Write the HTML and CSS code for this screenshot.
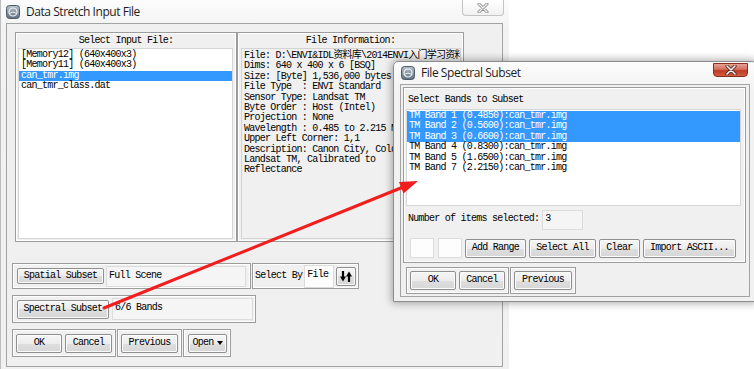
FILE: index.html
```html
<!DOCTYPE html>
<html lang="en">

<head>
    <meta charset="UTF-8">
    <title>Data Stretch Input File</title>
    <link rel="stylesheet" href="styles.css">
</head>

<body>
    <div class="desktop">

        <!-- main window (inactive) -->
        <div class="window main-win">
            <div class="titlebar">
                <svg class="app-icon" width="14" height="14" viewBox="0 0 14 14">
                    <defs>
                        <linearGradient id="ig1" x1="0" y1="0" x2="0" y2="1">
                            <stop offset="0" stop-color="#b9c3cc" />
                            <stop offset="1" stop-color="#5d6d7c" />
                        </linearGradient>
                    </defs>
                    <rect x="0.5" y="0.5" width="13" height="13" rx="3" fill="url(#ig1)" stroke="#4d5a66" />
                    <circle cx="7" cy="7" r="4" fill="none" stroke="#eef2f5" stroke-width="1.2" />
                    <path d="M3.6 8.4 Q7 5.6 10.4 8.4" fill="none" stroke="#eef2f5" stroke-width="1" />
                </svg>
                <span class="title">Data Stretch Input File</span>
                <div class="close-btn idle">
                    <svg width="12" height="10" viewBox="0 0 12 10">
                        <path d="M2 1 L10 9 M10 1 L2 9" stroke="#8c8c8c" stroke-width="3" stroke-linecap="round" />
                        <path d="M2 1 L10 9 M10 1 L2 9" stroke="#f4f4f4" stroke-width="1.3" stroke-linecap="round" />
                    </svg>
                </div>
            </div>

            <div class="client main-client">
                <div class="top-row">
                    <div class="group files">
                        <div class="group-title">Select Input File:</div>
                        <ul class="listbox">
                            <li>[Memory12] (640x400x3)</li>
                            <li>[Memory11] (640x400x3)</li>
                            <li class="sel">can_tmr.img</li>
                            <li>can_tmr_class.dat</li>
                        </ul>
                    </div>
                    <div class="group info">
                        <div class="group-title">File Information:</div>
                        <div class="info-text">File: D:\ENVI&amp;IDL资料库\2014ENVI入门学习资料
Dims: 640 x 400 x 6 [BSQ]
Size: [Byte] 1,536,000 bytes.
File Type  : ENVI Standard
Sensor Type: Landsat TM
Byte Order : Host (Intel)
Projection : None
Wavelength : 0.485 to 2.215 Micrometers
Upper Left Corner: 1,1
Description: Canon City, Colorado
Landsat TM, Calibrated to
Reflectance</div>
                    </div>
                </div>

                <div class="row row-spatial">
                    <div class="group spatial">
                        <button class="btn spatial-btn">Spatial Subset</button>
                        <div class="field spatial-field">Full Scene</div>
                    </div>
                    <div class="group selectby">
                        <span class="label">Select By</span>
                        <div class="field white by-field">File</div>
                        <button class="btn sort-btn">
                            <svg width="12" height="11" viewBox="0 0 12 11">
                                <path d="M3 0 V6" stroke="#000" stroke-width="2.2" />
                                <path d="M0 5.5 H6 L3 10.5 Z" fill="#000" />
                                <path d="M9 11 V5" stroke="#000" stroke-width="2.2" />
                                <path d="M6 5.5 H12 L9 0.5 Z" fill="#000" />
                            </svg>
                        </button>
                    </div>
                </div>

                <div class="row row-spectral">
                    <div class="group spectral">
                        <button class="btn spectral-btn">Spectral Subset</button>
                        <div class="field spectral-field">6/6 Bands</div>
                    </div>
                </div>

                <div class="row row-actions">
                    <div class="group ok-group">
                        <button class="btn ok-btn">OK</button>
                        <button class="btn cancel-btn">Cancel</button>
                    </div>
                    <div class="group prev-group">
                        <button class="btn prev-btn">Previous</button>
                    </div>
                    <div class="group open-group">
                        <button class="btn open-btn">Open<span class="caret"></span></button>
                    </div>
                </div>
            </div>
        </div>

        <!-- spectral subset dialog (active) -->
        <div class="window dlg">
            <div class="titlebar">
                <svg class="app-icon" width="14" height="14" viewBox="0 0 14 14">
                    <defs>
                        <linearGradient id="ig2" x1="0" y1="0" x2="0" y2="1">
                            <stop offset="0" stop-color="#b9c3cc" />
                            <stop offset="1" stop-color="#5d6d7c" />
                        </linearGradient>
                    </defs>
                    <rect x="0.5" y="0.5" width="13" height="13" rx="3" fill="url(#ig2)" stroke="#4d5a66" />
                    <circle cx="7" cy="7" r="4" fill="none" stroke="#eef2f5" stroke-width="1.2" />
                    <path d="M3.6 8.4 Q7 5.6 10.4 8.4" fill="none" stroke="#eef2f5" stroke-width="1" />
                </svg>
                <span class="title">File Spectral Subset</span>
                <div class="close-btn active">
                    <svg width="12" height="10" viewBox="0 0 12 10">
                        <path d="M2 1 L10 9 M10 1 L2 9" stroke="#5a2a24" stroke-width="3.2" stroke-linecap="round" />
                        <path d="M2 1 L10 9 M10 1 L2 9" stroke="#ffffff" stroke-width="1.5" stroke-linecap="round" />
                    </svg>
                </div>
            </div>

            <div class="client dlg-client">
                <div class="group bands">
                    <div class="bands-title">Select Bands to Subset</div>
                    <ul class="listbox band-list">
                        <li class="sel">TM Band 1 (0.4850):can_tmr.img</li>
                        <li class="sel">TM Band 2 (0.5600):can_tmr.img</li>
                        <li class="sel">TM Band 3 (0.6600):can_tmr.img</li>
                        <li>TM Band 4 (0.8300):can_tmr.img</li>
                        <li>TM Band 5 (1.6500):can_tmr.img</li>
                        <li>TM Band 7 (2.2150):can_tmr.img</li>
                    </ul>
                    <div class="count-row">
                        <span class="label">Number of items selected:</span>
                        <div class="field count-field">3</div>
                    </div>
                    <div class="range-row">
                        <div class="field white range-field"></div>
                        <div class="field white range-field"></div>
                        <button class="btn add-btn">Add Range</button>
                        <button class="btn all-btn">Select All</button>
                        <button class="btn clear-btn">Clear</button>
                        <button class="btn import-btn">Import ASCII...</button>
                    </div>
                </div>

                <div class="row dlg-actions">
                    <div class="group dlg-ok-group">
                        <button class="btn ok-btn">OK</button>
                        <button class="btn cancel-btn">Cancel</button>
                    </div>
                    <div class="group dlg-prev-group">
                        <button class="btn prev-btn">Previous</button>
                    </div>
                </div>
            </div>
        </div>

        <!-- red annotation arrow -->
        <svg class="annotation" width="754" height="369" viewBox="0 0 754 369">
            <line x1="104" y1="308" x2="402" y2="187.5" stroke="#f21d1d" stroke-width="3" stroke-linecap="round" />
            <polygon points="418,181 403.5,193.5 399,182" fill="#f21d1d" />
        </svg>
    </div>
</body>

</html>
```

FILE: styles.css
```css
* {
    box-sizing: border-box;
}

html,
body {
    margin: 0;
    padding: 0;
    background: #ffffff;
    overflow: hidden;
}

.desktop {
    position: relative;
    width: 754px;
    height: 369px;
    overflow: hidden;
    font: 10px/10.4px "Liberation Mono", "Noto Sans CJK SC", monospace;
    letter-spacing: -0.75px;
    color: #000;
}

/* ---------- windows ---------- */

.window {
    position: absolute;
    background: linear-gradient(#fcfcfc, #f2f2f2 30px, #f0f0f0);
}

.main-win {
    left: 0;
    top: 0;
    width: 509px;
    height: 380px;
    border-left: 1px solid #bdbdbd;
}

.dlg {
    left: 393px;
    top: 61px;
    width: 364px;
    height: 241px;
    border: 1px solid #8d8d8d;
    border-radius: 5px 5px 0 0;
    box-shadow: 0 0 9px 1px rgba(0, 0, 0, 0.35);
}

.titlebar {
    position: relative;
    display: flex;
    align-items: center;
    height: 23px;
    padding-left: 5px;
}

.dlg .titlebar {
    height: 22px;
    padding-left: 7px;
}

.app-icon {
    flex: none;
}

.title {
    margin-left: 6px;
    font: 12px "Open Sans", "Noto Sans", sans-serif;
    letter-spacing: -0.45px;
    color: #1e1e1e;
    padding-bottom: 1px;
}

.close-btn {
    position: absolute;
    display: flex;
    align-items: center;
    justify-content: center;
    border-radius: 0 0 4px 4px;
}

.close-btn.idle {
    right: 5px;
    top: 0;
    width: 42px;
    height: 16px;
    border: 1px solid #c3c3c3;
    border-top: none;
    background: linear-gradient(#ffffff, #f1f1f1);
}

.close-btn.active {
    right: 8px;
    top: 1px;
    width: 35px;
    height: 14px;
    border: 1px solid #8a2b20;
    background: linear-gradient(#e7a395, #d46d5b 45%, #c13b26 55%, #cf5c43);
}

.client {
    background: #f0f0f0;
    border: 1px solid #a3a3a3;
}

.main-client {
    margin-left: 5px;
    width: 497px;
    height: 344px;
}

.dlg-client {
    margin-left: 6px;
    width: 350px;
    height: 213px;
}

/* ---------- groups / frames ---------- */

.group {
    border: 1px solid #9c9c9c;
    box-shadow: inset 0 0 0 1px #ffffff;
    flex: none;
}

.group-title {
    height: 15px;
    padding-top: 3px;
    text-align: center;
}

.row {
    display: flex;
    gap: 1px;
    margin-left: 5px;
}

.label {
    white-space: nowrap;
}

/* ---------- top row ---------- */

.top-row {
    display: flex;
    gap: 0;
    padding: 8px 0 0 8px;
}

.files {
    width: 222px;
    height: 210px;
    display: flex;
    flex-direction: column;
}

.info {
    width: 227px;
    height: 210px;
    display: flex;
    flex-direction: column;
}

.listbox {
    list-style: none;
    margin: 0;
    padding: 1px 0 0;
    background: #ffffff;
    border: 1px solid #d6d6d6;
    overflow: hidden;
}

.listbox li {
    height: 10.4px;
    padding-left: 2px;
    white-space: pre;
}

.listbox li.sel {
    background: #3399ff;
    color: #ffffff;
}

.files .listbox {
    flex: 1;
    margin: 0 3px 2px 2px;
}

.info-text {
    flex: 1;
    margin: 0 2px 2px 3px;
    padding: 2px 0 0 2px;
    border: 1px solid #d3d3d3;
    white-space: pre;
    overflow: hidden;
}

/* ---------- subset rows ---------- */

.row-spatial {
    margin-top: 21px;
}

.spatial,
.selectby,
.spectral,
.ok-group,
.prev-group,
.open-group,
.dlg-ok-group,
.dlg-prev-group {
    display: flex;
    align-items: center;
}

.spatial {
    width: 239px;
    height: 26px;
    padding-left: 4px;
    gap: 2px;
}

.selectby {
    width: 107px;
    height: 26px;
    padding-left: 2px;
    gap: 2px;
}

.row-spectral {
    margin-top: 6px;
}

.spectral {
    width: 244px;
    height: 28px;
    padding-left: 4px;
    gap: 3px;
}

.row-actions {
    margin-top: 6px;
}

.field {
    background: #f5f5f5;
    border: 1px solid #dcdcdc;
    padding: 4px 0 0 2px;
    white-space: pre;
    align-self: center;
}

.field.white {
    background: #fdfdfd;
}

.spatial-field {
    width: 140px;
    height: 21px;
}

.by-field {
    width: 30px;
    height: 23px;
}

.spectral-field {
    width: 141px;
    height: 22px;
}

/* ---------- buttons ---------- */

.btn {
    font: inherit;
    letter-spacing: inherit;
    color: #000;
    margin: 0;
    padding: 0;
    height: 19px;
    border: 1px solid #8f8f8f;
    border-radius: 2px;
    background: linear-gradient(#f6f6f6, #ececec 50%, #dfdfdf 50%, #d6d6d6);
    box-shadow: inset 0 0 0 1px #fbfbfb;
    flex: none;
}

.spatial-btn {
    width: 87px;
    height: 16px;
}

.sort-btn {
    width: 20px;
    display: flex;
    align-items: center;
    justify-content: center;
}

.spectral-btn {
    width: 92px;
}

.ok-group {
    width: 104px;
    height: 28px;
    padding-left: 3px;
    gap: 3px;
}

.ok-btn {
    width: 46px;
}

.cancel-btn {
    width: 47px;
}

.prev-group {
    width: 65px;
    height: 28px;
    padding-left: 3px;
}

.prev-btn {
    width: 57px;
}

.open-group {
    width: 48px;
    height: 28px;
    padding-left: 4px;
}

.open-btn {
    width: 39px;
    display: flex;
    align-items: center;
    justify-content: center;
    gap: 3px;
}

.caret {
    width: 0;
    height: 0;
    border-left: 3px solid transparent;
    border-right: 3px solid transparent;
    border-top: 4px solid #000;
}

/* ---------- dialog body ---------- */

.bands {
    margin: 2px 0 0 2px;
    width: 343px;
    height: 176px;
    display: flex;
    flex-direction: column;
}

.bands-title {
    height: 21px;
    padding: 7px 0 0 4px;
}

.band-list {
    margin-left: 2px;
    width: 335px;
    height: 97px;
}

.count-row {
    display: flex;
    align-items: center;
    height: 27px;
    padding-left: 4px;
    gap: 3px;
}

.count-field {
    width: 41px;
    height: 20px;
    padding-top: 3px;
}

.range-row {
    display: flex;
    align-items: center;
    gap: 4px;
    margin-top: 5px;
    padding-left: 6px;
}

.range-field {
    width: 24px;
    height: 20px;
}

.range-row .btn {
    margin-left: -1px;
}

.add-btn {
    width: 61px;
}

.all-btn {
    width: 67px;
}

.clear-btn {
    width: 41px;
}

.import-btn {
    width: 93px;
}

.dlg-actions {
    margin-top: 4px;
}

.dlg-ok-group {
    width: 103px;
    height: 27px;
    padding-left: 3px;
    gap: 3px;
}

.dlg-ok-group .cancel-btn {
    width: 46px;
}

.dlg-prev-group {
    width: 66px;
    height: 27px;
    padding-left: 3px;
}

.dlg-prev-group .prev-btn {
    width: 58px;
}

/* ---------- overlay ---------- */

.annotation {
    position: absolute;
    left: 0;
    top: 0;
    pointer-events: none;
}
```
